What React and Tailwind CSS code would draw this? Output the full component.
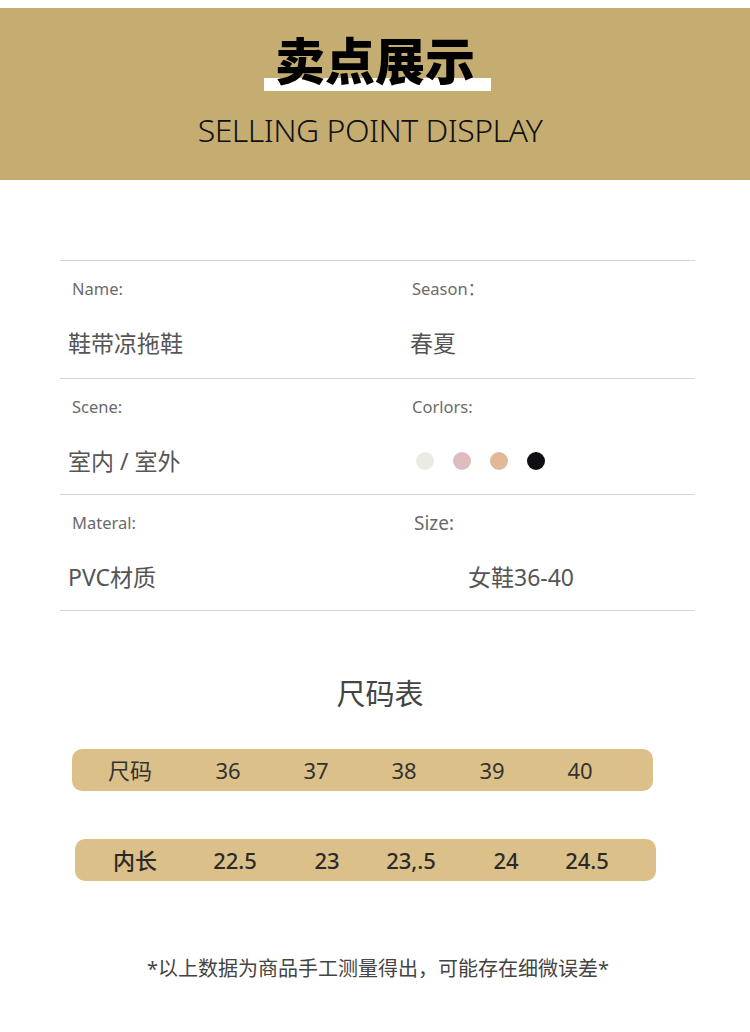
const sans = "font-['Noto_Sans','Noto_Sans_CJK_SC',sans-serif]";

const infoRows = [
    { left: { label: "Name:", value: "鞋带凉拖鞋" }, right: { label: "Season：", value: "春夏" } },
    { left: { label: "Scene:", value: "室内 / 室外" }, right: { label: "Corlors:", colors: ["#ecebe3", "#dfbcc0", "#e2b996", "#0d0f12"] } },
    { left: { label: "Materal:", value: "PVC材质" }, right: { label: "Size:", value: "女鞋36-40", big: true } },
];

const sizeRow = [
    { text: "尺码", w: "w-[88px]" },
    { text: "36", w: "w-[88px]" },
    { text: "37", w: "w-[88px]" },
    { text: "38", w: "w-[88px]" },
    { text: "39", w: "w-[88px]" },
    { text: "40", w: "w-[88px]" },
];

const lengthRow = [
    { text: "内长", w: "w-[120px]" },
    { text: "22.5", w: "w-[80px]" },
    { text: "23", w: "w-[104px]" },
    { text: "23,.5", w: "w-[64px]" },
    { text: "24", w: "w-[126px]" },
    { text: "24.5", w: "w-[36px]" },
];

function Cell({ label, value, colors, big, right }) {
    return (
        <div className="flex flex-col">
            <div
                className={`h-[56px] flex items-center text-[#6b6b6b] ${
                    big ? "text-[19px] pl-[14px]" : "text-[16.5px] pl-[12px]"
                }`}
            >
                {label}
            </div>
            {colors ? (
                <div className="h-[52px] flex items-center gap-[19px] pl-[16px]">
                    {colors.map((c) => (
                        <span key={c} className="w-[18px] h-[18px] rounded-full" style={{ backgroundColor: c }}></span>
                    ))}
                </div>
            ) : (
                <div
                    className={`h-[52px] flex items-center text-[23px] text-[#555] ${
                        big ? "pl-[68px]" : right ? "pl-[10px]" : "pl-[8px]"
                    }`}
                >
                    {value}
                </div>
            )}
        </div>
    );
}

export default function App() {
    return (
        <div className={`w-[750px] min-h-[1032px] bg-white ${sans}`}>
            {/* Header band */}
            <div className="pt-[8px]">
                <div className="h-[172px] bg-[#c5ad72] flex flex-col items-center pt-[28px]">
                    <div className="relative h-[50px] w-[232px] flex justify-center">
                        <div className="absolute left-[5px] top-[42px] w-[227px] h-[13px] bg-white"></div>
                        <span className="relative text-[50px] leading-[50px] font-black text-black">卖点展示</span>
                    </div>
                    <div className="mt-[24px] pr-[10px] text-[32px] leading-[40px] text-[#111] font-light tracking-[-0.5px]">
                        SELLING POINT DISPLAY
                    </div>
                </div>
            </div>

            {/* Info table */}
            <div className="mt-[80px] mx-[60px] w-[635px] border-b border-[#d6d6d6]">
                {infoRows.map((row, i) => (
                    <div
                        key={i}
                        className={`grid grid-cols-[340px_1fr] border-t border-[#d6d6d6] ${i === 0 ? "h-[118px]" : "h-[116px]"}`}
                    >
                        <Cell {...row.left} />
                        <Cell {...row.right} right />
                    </div>
                ))}
            </div>

            {/* Size chart */}
            <div className="mt-[63px] text-center text-[29px] leading-[40px] text-[#444] pl-[10px]">尺码表</div>

            <div className="mt-[35px] ml-[72px] w-[581px] h-[42px] rounded-[10px] bg-[#dbc189] flex items-center pl-[14px] text-[22px] text-[#333]">
                {sizeRow.map((c, i) => (
                    <div key={i} className={`${c.w} ${i === 1 ? "ml-[10px]" : ""} flex justify-center whitespace-nowrap`}>
                        {c.text}
                    </div>
                ))}
            </div>

            <div className="mt-[48px] ml-[75px] w-[581px] h-[42px] rounded-[10px] bg-[#dbc189] flex items-center text-[22px] text-[#2a2a2a] font-medium">
                {lengthRow.map((c, i) => (
                    <div key={i} className={`${c.w} flex justify-center whitespace-nowrap`}>
                        {c.text}
                    </div>
                ))}
            </div>

            <div className="mt-[74px] pl-[6px] text-center text-[20px] leading-[28px] text-[#444]">
                *以上数据为商品手工测量得出，可能存在细微误差*
            </div>
        </div>
    );
}
